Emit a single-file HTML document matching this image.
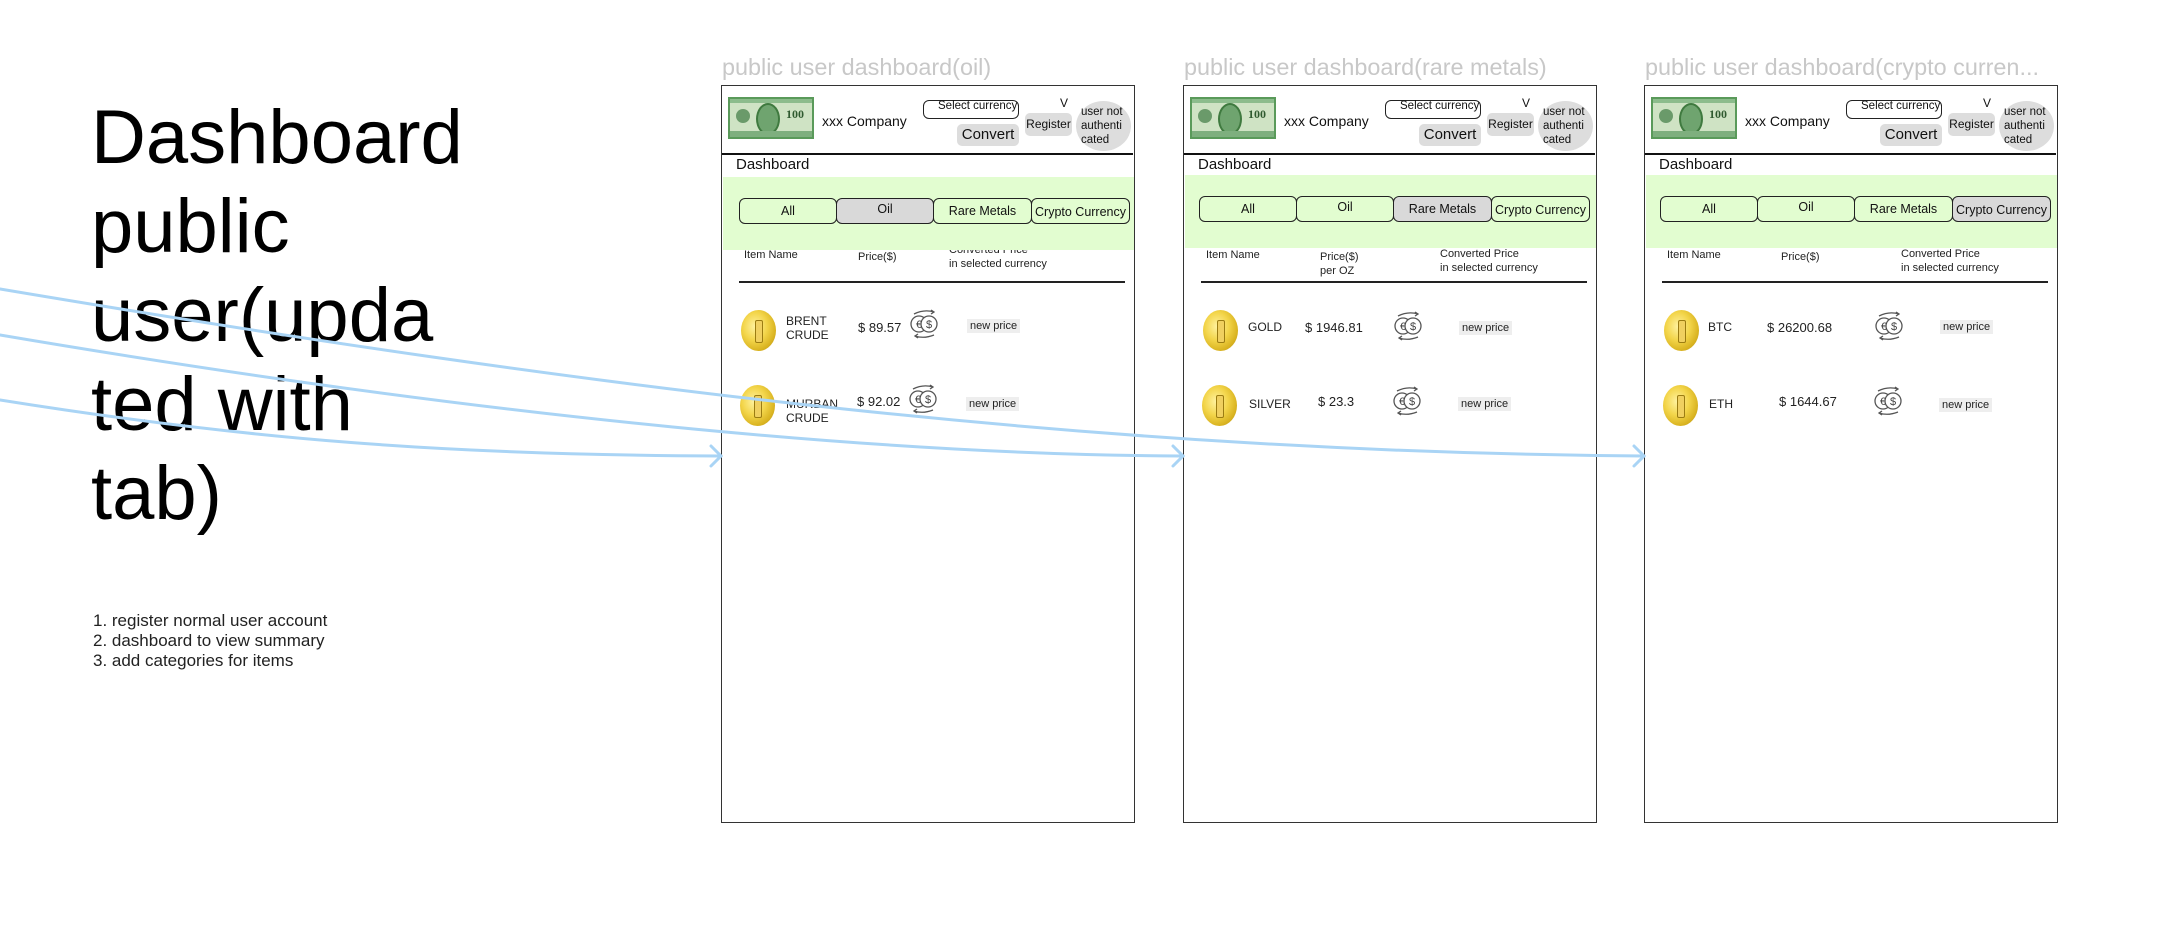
<!DOCTYPE html>
<html><head><meta charset="utf-8"><style>
*{margin:0;padding:0;box-sizing:border-box}
body{width:2176px;height:928px;background:#fff;position:relative;overflow:hidden;font-family:"Liberation Sans",sans-serif;color:#111}
.abs{position:absolute}
.big{left:91px;top:93px;font-size:76px;line-height:89px;color:#000;white-space:nowrap}
.list{left:93px;top:611px;font-size:17px;line-height:20px;color:#222}
.ttl{font-size:23.4px;color:#c8c8c8;white-space:nowrap}
.frame{top:85px;width:414px;height:738px;border:1.5px solid #333;background:#fff}
.frame .abs{white-space:nowrap}
.bill{left:6px;top:11px;width:86px;height:42px;background:#cfe3c4;border:2px solid #5a9a5a}
.bill .p{position:absolute;left:26px;top:4px;width:24px;height:32px;border-radius:50%;background:#6fa46f;border:2px solid #3f7a3f}
.bill .s{position:absolute;left:6px;top:10px;width:14px;height:14px;border-radius:50%;background:#6a9a6a}
.bill .n{position:absolute;left:56px;top:8px;font:bold 12px "Liberation Serif",serif;color:#2f5a2f}
.bill .b{position:absolute;left:0;right:0;bottom:0;height:6px;background:#7eaf7e}
.bill .t{position:absolute;left:0;right:0;top:0;height:4px;background:#8cbc8c}
.sel{left:201px;top:14px;width:96px;height:19px;border:1.5px solid #222;border-radius:6px;font-size:11.5px;line-height:10px;padding-left:14px;overflow:visible}
.conv{left:235px;top:38px;width:62px;height:22px;background:#ddd;border-radius:5px;font-size:15px;line-height:22px;text-align:center}
.reg{left:303px;top:27px;width:47px;height:23px;background:#ddd;border-radius:5px;font-size:12px;line-height:23px;text-align:center}
.circ{left:354px;top:15px;width:55px;height:50px;border-radius:50%;background:#ddd;font-size:11.5px;line-height:14px;padding:4px 0 0 5px}
.hline{left:0;top:67px;width:411px;height:2px;background:#111}
.dash{left:14px;top:70px;font-size:15px}
.band{left:1px;top:91px;width:411px;height:73px;background:#e2fdd0;z-index:2}
.tab{top:21px;height:26px;border:1.5px solid #222;border-radius:6px;font-size:12.5px;line-height:24px;text-align:center;background:#e2fdd0}
.tab.on{background:#d9d9d9}
.th{font-size:11px;line-height:14px;color:#222}
.div{left:17px;top:195px;width:386px;height:1.5px;background:#222}
.coin{width:35px;height:41px;border-radius:50%;background:radial-gradient(ellipse at 40% 40%,#fff2a0 0%,#f3d54a 40%,#d9b320 70%,#a8851a 100%)}
.coin:after{content:"";position:absolute;left:14px;top:10px;width:6px;height:21px;border:1.5px solid #9b7c12;border-radius:2px;background:#f0d060}
.nm{font-size:12px;line-height:14px;color:#222}
.pr{font-size:13px;color:#222}
.np{font-size:11px;background:#eee;padding:1px 3px;color:#222}
</style></head><body>
<div class="abs big">Dashboard<br>public<br>user(upda<br>ted with<br>tab)</div>
<div class="abs list">1. register normal user account<br>2. dashboard to view summary<br>3. add categories for items</div>

<div class="abs ttl" style="left:722px;top:54px">public user dashboard(oil)</div>
<div class="abs ttl" style="left:1184px;top:54px">public user dashboard(rare metals)</div>
<div class="abs ttl" style="left:1645px;top:54px">public user dashboard(crypto curren...</div>

<!-- Frame 1 -->
<div class="abs frame" style="left:721px">
<div class="abs bill"><div class="t"></div><div class="s"></div><div class="p"></div><div class="n">100</div><div class="b"></div></div>
<div class="abs" style="left:100px;top:27px;font-size:14px">xxx Company</div>
<div class="abs sel">Select currency</div><div class="abs" style="left:338px;top:10px;font-size:12px">V</div>
<div class="abs conv">Convert</div><div class="abs reg">Register</div>
<div class="abs circ">user not<br>authenti<br>cated</div>
<div class="abs hline"></div><div class="abs dash">Dashboard</div>
<div class="abs band">
<div class="abs tab" style="left:16px;width:98px">All</div>
<div class="abs tab on" style="left:113px;width:98px;line-height:20px">Oil</div>
<div class="abs tab" style="left:210px;width:99px">Rare Metals</div>
<div class="abs tab" style="left:308px;width:99px;line-height:26px">Crypto Currency</div>
</div>
<div class="abs th" style="left:22px;top:162px">Item Name</div>
<div class="abs th" style="left:136px;top:164px">Price($)</div>
<div class="abs th" style="left:227px;top:157px">Converted Price<br>in selected currency</div>
<div class="abs div"></div>
<div class="abs coin" style="left:19px;top:224px"></div>
<div class="abs nm" style="left:64px;top:228px">BRENT<br>CRUDE</div>
<div class="abs pr" style="left:136px;top:234px">$ 89.57</div>
<svg class="abs" style="left:186px;top:222px" width="32" height="32" viewBox="0 0 32 32"><g fill="none" stroke="#555" stroke-width="1.3"><circle cx="11" cy="16" r="8"/><circle cx="21" cy="16" r="8" fill="#fff"/><path d="M6 6 Q16 1 26 4 M23 2 L26 4 L23 6 M26 27 Q16 31 7 28 M10 26 L7 28 L10 30"/></g><text x="11" y="20" font-size="11" text-anchor="middle" fill="#444" font-family="Liberation Sans">€</text><text x="21" y="20" font-size="11" text-anchor="middle" fill="#444" font-family="Liberation Sans">$</text></svg>
<div class="abs np" style="left:245px;top:233px">new price</div>
<div class="abs coin" style="left:18px;top:299px"></div>
<div class="abs nm" style="left:64px;top:311px">MURBAN<br>CRUDE</div>
<div class="abs pr" style="left:135px;top:308px">$ 92.02</div>
<svg class="abs" style="left:185px;top:297px" width="32" height="32" viewBox="0 0 32 32"><g fill="none" stroke="#555" stroke-width="1.3"><circle cx="11" cy="16" r="8"/><circle cx="21" cy="16" r="8" fill="#fff"/><path d="M6 6 Q16 1 26 4 M23 2 L26 4 L23 6 M26 27 Q16 31 7 28 M10 26 L7 28 L10 30"/></g><text x="11" y="20" font-size="11" text-anchor="middle" fill="#444" font-family="Liberation Sans">€</text><text x="21" y="20" font-size="11" text-anchor="middle" fill="#444" font-family="Liberation Sans">$</text></svg>
<div class="abs np" style="left:244px;top:311px">new price</div>
</div>

<!-- Frame 2 -->
<div class="abs frame" style="left:1183px">
<div class="abs bill"><div class="t"></div><div class="s"></div><div class="p"></div><div class="n">100</div><div class="b"></div></div>
<div class="abs" style="left:100px;top:27px;font-size:14px">xxx Company</div>
<div class="abs sel">Select currency</div><div class="abs" style="left:338px;top:10px;font-size:12px">V</div>
<div class="abs conv">Convert</div><div class="abs reg">Register</div>
<div class="abs circ">user not<br>authenti<br>cated</div>
<div class="abs hline"></div><div class="abs dash">Dashboard</div>
<div class="abs band" style="top:89px">
<div class="abs tab" style="left:14px;width:98px">All</div>
<div class="abs tab" style="left:111px;width:98px;line-height:20px">Oil</div>
<div class="abs tab on" style="left:208px;width:99px">Rare Metals</div>
<div class="abs tab" style="left:306px;width:99px;line-height:26px">Crypto Currency</div>
</div>
<div class="abs th" style="left:22px;top:162px">Item Name</div>
<div class="abs th" style="left:136px;top:164px">Price($)<br>per OZ</div>
<div class="abs th" style="left:256px;top:161px">Converted Price<br>in selected currency</div>
<div class="abs div"></div>
<div class="abs coin" style="left:19px;top:224px"></div>
<div class="abs nm" style="left:64px;top:234px">GOLD</div>
<div class="abs pr" style="left:121px;top:234px">$ 1946.81</div>
<svg class="abs" style="left:208px;top:224px" width="32" height="32" viewBox="0 0 32 32"><g fill="none" stroke="#555" stroke-width="1.3"><circle cx="11" cy="16" r="8"/><circle cx="21" cy="16" r="8" fill="#fff"/><path d="M6 6 Q16 1 26 4 M23 2 L26 4 L23 6 M26 27 Q16 31 7 28 M10 26 L7 28 L10 30"/></g><text x="11" y="20" font-size="11" text-anchor="middle" fill="#444" font-family="Liberation Sans">€</text><text x="21" y="20" font-size="11" text-anchor="middle" fill="#444" font-family="Liberation Sans">$</text></svg>
<div class="abs np" style="left:275px;top:235px">new price</div>
<div class="abs coin" style="left:18px;top:299px"></div>
<div class="abs nm" style="left:65px;top:311px">SILVER</div>
<div class="abs pr" style="left:134px;top:308px">$ 23.3</div>
<svg class="abs" style="left:207px;top:299px" width="32" height="32" viewBox="0 0 32 32"><g fill="none" stroke="#555" stroke-width="1.3"><circle cx="11" cy="16" r="8"/><circle cx="21" cy="16" r="8" fill="#fff"/><path d="M6 6 Q16 1 26 4 M23 2 L26 4 L23 6 M26 27 Q16 31 7 28 M10 26 L7 28 L10 30"/></g><text x="11" y="20" font-size="11" text-anchor="middle" fill="#444" font-family="Liberation Sans">€</text><text x="21" y="20" font-size="11" text-anchor="middle" fill="#444" font-family="Liberation Sans">$</text></svg>
<div class="abs np" style="left:274px;top:311px">new price</div>
</div>

<!-- Frame 3 -->
<div class="abs frame" style="left:1644px">
<div class="abs bill"><div class="t"></div><div class="s"></div><div class="p"></div><div class="n">100</div><div class="b"></div></div>
<div class="abs" style="left:100px;top:27px;font-size:14px">xxx Company</div>
<div class="abs sel">Select currency</div><div class="abs" style="left:338px;top:10px;font-size:12px">V</div>
<div class="abs conv">Convert</div><div class="abs reg">Register</div>
<div class="abs circ">user not<br>authenti<br>cated</div>
<div class="abs hline"></div><div class="abs dash">Dashboard</div>
<div class="abs band" style="top:89px">
<div class="abs tab" style="left:14px;width:98px">All</div>
<div class="abs tab" style="left:111px;width:98px;line-height:20px">Oil</div>
<div class="abs tab" style="left:208px;width:99px">Rare Metals</div>
<div class="abs tab on" style="left:306px;width:99px;line-height:26px">Crypto Currency</div>
</div>
<div class="abs th" style="left:22px;top:162px">Item Name</div>
<div class="abs th" style="left:136px;top:164px">Price($)</div>
<div class="abs th" style="left:256px;top:161px">Converted Price<br>in selected currency</div>
<div class="abs div"></div>
<div class="abs coin" style="left:19px;top:224px"></div>
<div class="abs nm" style="left:63px;top:234px">BTC</div>
<div class="abs pr" style="left:122px;top:234px">$ 26200.68</div>
<svg class="abs" style="left:228px;top:224px" width="32" height="32" viewBox="0 0 32 32"><g fill="none" stroke="#555" stroke-width="1.3"><circle cx="11" cy="16" r="8"/><circle cx="21" cy="16" r="8" fill="#fff"/><path d="M6 6 Q16 1 26 4 M23 2 L26 4 L23 6 M26 27 Q16 31 7 28 M10 26 L7 28 L10 30"/></g><text x="11" y="20" font-size="11" text-anchor="middle" fill="#444" font-family="Liberation Sans">€</text><text x="21" y="20" font-size="11" text-anchor="middle" fill="#444" font-family="Liberation Sans">$</text></svg>
<div class="abs np" style="left:295px;top:234px">new price</div>
<div class="abs coin" style="left:18px;top:299px"></div>
<div class="abs nm" style="left:64px;top:311px">ETH</div>
<div class="abs pr" style="left:134px;top:308px">$ 1644.67</div>
<svg class="abs" style="left:227px;top:299px" width="32" height="32" viewBox="0 0 32 32"><g fill="none" stroke="#555" stroke-width="1.3"><circle cx="11" cy="16" r="8"/><circle cx="21" cy="16" r="8" fill="#fff"/><path d="M6 6 Q16 1 26 4 M23 2 L26 4 L23 6 M26 27 Q16 31 7 28 M10 26 L7 28 L10 30"/></g><text x="11" y="20" font-size="11" text-anchor="middle" fill="#444" font-family="Liberation Sans">€</text><text x="21" y="20" font-size="11" text-anchor="middle" fill="#444" font-family="Liberation Sans">$</text></svg>
<div class="abs np" style="left:294px;top:312px">new price</div>
</div>

<svg class="abs" style="left:0;top:0;z-index:5" width="2176" height="928" viewBox="0 0 2176 928">
<g fill="none" stroke="#a9d4f5" stroke-width="3" stroke-linecap="round">
<path d="M0 289 C600 390, 1100 452, 1644 456"/>
<path d="M0 335 C500 420, 900 455, 1183 456"/>
<path d="M0 400 C250 440, 450 455, 721 456"/>
<path d="M711 446 L721 456 L711 466"/>
<path d="M1173 446 L1183 456 L1173 466"/>
<path d="M1634 446 L1644 456 L1634 466"/>
</g></svg>
</body></html>
